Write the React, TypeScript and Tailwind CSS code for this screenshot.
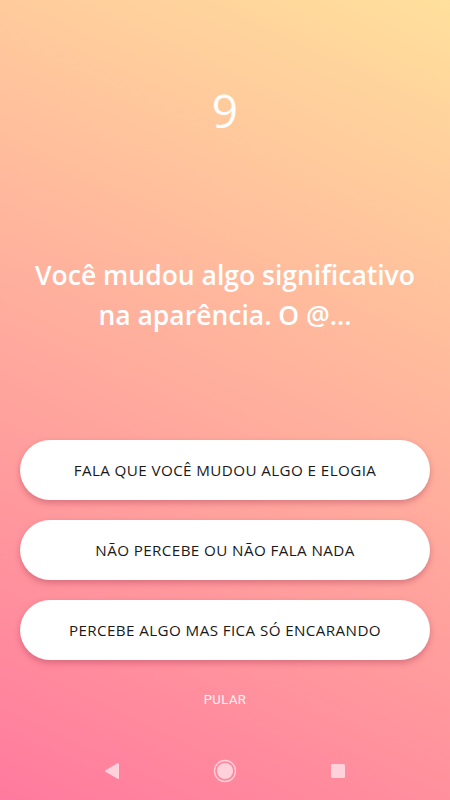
import React from 'react';

const options = [
  'FALA QUE VOCÊ MUDOU ALGO E ELOGIA',
  'NÃO PERCEBE OU NÃO FALA NADA',
  'PERCEBE ALGO MAS FICA SÓ ENCARANDO',
];

export default function App() {
  return (
    <div className="w-[450px] h-[800px] flex flex-col bg-[linear-gradient(25deg,#ff7a9e_0%,#ffe09c_100%)] font-['Open_Sans',sans-serif]">
      {/* Question number */}
      <div className="h-[220px] pt-[80px] flex justify-center">
        <span className="text-white text-[46px] leading-[60px] font-medium">9</span>
      </div>

      {/* Question */}
      <div className="h-[220px] pt-[35px] px-4 text-center">
        <h1 className="text-white text-[26.5px] leading-[40px] font-semibold">
          Você mudou algo significativo na aparência. O @...
        </h1>
      </div>

      {/* Options */}
      <div className="flex flex-col gap-5 px-5">
        {options.map(option => (
          <button
            key={option}
            className="h-[60px] w-full rounded-[30px] bg-white shadow-[0_3px_6px_rgba(150,40,70,0.35)] text-[#1a1a1a] text-[15.2px] tracking-[0.4px] font-normal"
          >
            {option}
          </button>
        ))}
      </div>

      <div className="mt-[30px] flex justify-center">
        <span className="text-white/90 text-[13px] tracking-[0.5px] font-['Roboto',sans-serif]">PULAR</span>
      </div>

      {/* Android nav bar */}
      <div className="mt-auto h-[48px] flex items-center justify-between px-[104px] pb-[10px]">
        <svg width="16" height="18" viewBox="0 0 16 18">
          <path d="M14 2 L2 9 L14 16 Z" fill="#ffd1da" stroke="#ffd1da" strokeWidth="2" strokeLinejoin="round" />
        </svg>
        <svg width="24" height="24" viewBox="0 0 24 24">
          <circle cx="12" cy="12" r="10.5" fill="none" stroke="#ffd1da" strokeWidth="1.3" />
          <circle cx="12" cy="12" r="8" fill="#ffd1da" />
        </svg>
        <svg width="16" height="16" viewBox="0 0 16 16">
          <rect x="1" y="1" width="14" height="14" rx="1.5" fill="#ffd1da" />
        </svg>
      </div>
    </div>
  );
}
